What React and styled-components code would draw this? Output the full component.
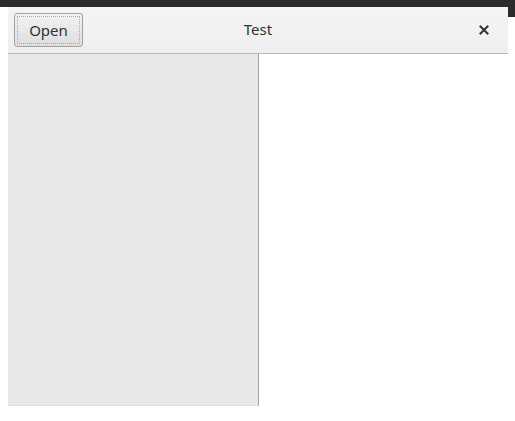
import React from 'react';
import styled, { createGlobalStyle } from 'styled-components';

const GlobalStyle = createGlobalStyle`
  html, body {
    margin: 0;
    padding: 0;
    background: #ffffff;
    font-family: "Noto Sans", "DejaVu Sans", sans-serif;
  }
`;

function App() {
  return (
    <Page>
      <GlobalStyle />
      <TopStrip />
      <Desk>
        <Window>
          <HeaderBar>
            <OpenButton>Open</OpenButton>
            <Title>Test</Title>
            <CloseButton aria-label="Close">
              <svg width="10" height="10" viewBox="0 0 10 10">
                <path d="M1.5 1.5 L8.5 8.5 M8.5 1.5 L1.5 8.5" stroke="#2e3436" strokeWidth="2" strokeLinecap="square" />
              </svg>
            </CloseButton>
          </HeaderBar>
          <Panes>
            <Sidebar />
            <Content />
          </Panes>
        </Window>
        <RightEdge />
      </Desk>
    </Page>
  );
}

export default App;

const Page = styled.div`
  width: 515px;
  height: 421px;
  background: #ffffff;
  overflow: hidden;
`;

const TopStrip = styled.div`
  height: 7px;
  background: #2b2b2b;
`;

const Desk = styled.div`
  display: flex;
  padding-left: 8px;
`;

const RightEdge = styled.div`
  width: 7px;
  height: 10px;
  background: #2b2b2b;
`;

const Window = styled.div`
  width: 500px;
  display: flex;
  flex-direction: column;
`;

const HeaderBar = styled.div`
  height: 47px;
  box-sizing: border-box;
  display: grid;
  grid-template-columns: 1fr auto 1fr;
  align-items: center;
  padding: 0 6px;
  background: linear-gradient(#f4f4f4, #efefef);
  border-bottom: 1px solid #b6b6b3;
  color: #2e3436;
`;

const OpenButton = styled.button`
  justify-self: start;
  width: 69px;
  height: 34px;
  box-sizing: border-box;
  font-family: inherit;
  font-size: 15px;
  color: #2e3436;
  border: 1px solid #a1a1a1;
  border-radius: 3px;
  background: linear-gradient(#f2f2f2, #dedede);
  outline: 1px dotted #a8a8a8;
  outline-offset: -4px;
  padding: 0;
`;

const Title = styled.div`
  font-size: 15px;
  line-height: 1;
  padding-bottom: 1px;
`;

const CloseButton = styled.div`
  justify-self: end;
  width: 10px;
  height: 10px;
  margin-right: 13px;
  display: flex;
`;

const Panes = styled.div`
  display: flex;
  height: 352px;
`;

const Sidebar = styled.div`
  width: 250px;
  background: #e8e8e8;
  border-right: 1px solid #a3a3a3;
  border-bottom: 1px solid #e0e0e0;
`;

const Content = styled.div`
  flex: 1;
  background: #ffffff;
`;
